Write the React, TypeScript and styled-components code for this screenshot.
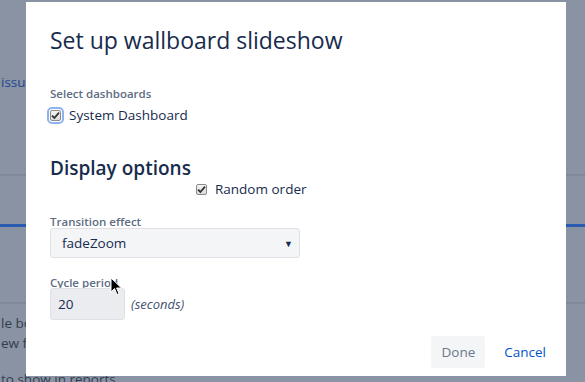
import React, { useState } from "react";
import styled, { createGlobalStyle } from "styled-components";

const GlobalStyle = createGlobalStyle`
  html, body {
    margin: 0;
    padding: 0;
    width: 585px;
    height: 382px;
    overflow: hidden;
    background: #8993a4;
    font-family: "Open Sans", "Noto Sans", Arial, sans-serif;
  }
`;

// Dimmed page behind the dialog
const Page = styled.div`
  position: relative;
  width: 585px;
  height: 382px;
  overflow: hidden;
  background: #8993a4;
  display: flex;
  flex-direction: column;
`;

const PageText = styled.div<{ $blue?: boolean; $top: number }>`
  flex-shrink: 0;
  margin-top: ${(p) => p.$top}px;
  padding-left: 1px;
  font-size: 13.5px;
  line-height: 20px;
  color: ${(p) => (p.$blue ? "#23478f" : "#333d50")};
  white-space: nowrap;
`;

const Rule = styled.div<{ $top: number; $blue?: boolean }>`
  flex-shrink: 0;
  margin-top: ${(p) => p.$top}px;
  height: ${(p) => (p.$blue ? 3 : 2)}px;
  background: ${(p) => (p.$blue ? "#2a5bb0" : "#7f899a")};
`;

// Dialog
const Dialog = styled.div`
  position: absolute;
  left: 26px;
  top: 2px;
  width: 540px;
  height: 374px;
  background: #ffffff;
  box-sizing: border-box;
  padding: 24px 20px 8px 24px;
  display: flex;
  flex-direction: column;
  color: #172b4d;
`;

const Title = styled.h2`
  margin: 0;
  font-size: 23px;
  line-height: 28px;
  font-weight: 400;
  color: #172b4d;
`;

const Label = styled.div<{ $top: number }>`
  margin-top: ${(p) => p.$top}px;
  font-size: 11.5px;
  line-height: 14px;
  font-weight: 600;
  color: #5e6c84;
`;

const CheckRow = styled.label<{ $indent?: number; $top: number }>`
  display: flex;
  align-items: center;
  gap: 8px;
  margin-top: ${(p) => p.$top}px;
  margin-left: ${(p) => p.$indent ?? 0}px;
  font-size: 13.5px;
  line-height: 20px;
  color: #172b4d;
`;

const Box = styled.span<{ $focus?: boolean }>`
  width: 11px;
  height: 11px;
  box-sizing: border-box;
  border: 1px solid #8b8b8b;
  border-radius: 2px;
  background: linear-gradient(#f4f4f4, #dcdcdc);
  display: flex;
  align-items: center;
  justify-content: center;
  outline: ${(p) => (p.$focus ? "2px solid #8eb2f0" : "none")};
  outline-offset: 1px;
`;

const SectionTitle = styled.h3`
  margin: 31px 0 0;
  font-size: 19px;
  line-height: 24px;
  font-weight: 600;
  color: #172b4d;
`;

const Select = styled.div`
  margin-top: -1px;
  width: 250px;
  height: 30px;
  box-sizing: border-box;
  border: 1px solid #dfe1e6;
  border-radius: 3px;
  background: #f4f5f7;
  display: flex;
  align-items: center;
  justify-content: space-between;
  padding: 0 6px 0 11px;
  font-size: 13.5px;
  color: #172b4d;
`;

const Arrow = styled.span`
  font-size: 9px;
  color: #172b4d;
`;

const FieldRow = styled.div`
  margin-top: -2px;
  display: flex;
  align-items: center;
  gap: 6px;
`;

const NumberInput = styled.div`
  width: 75px;
  height: 32px;
  box-sizing: border-box;
  border: 1px solid #dfe1e6;
  border-radius: 3px;
  background: #ebecf0;
  display: flex;
  align-items: center;
  padding-left: 7px;
  font-size: 13.5px;
  color: #172b4d;
`;

const Hint = styled.span`
  font-size: 13px;
  font-style: italic;
  color: #42526e;
`;

const Footer = styled.div`
  margin-top: auto;
  display: flex;
  justify-content: flex-end;
  align-items: center;
  gap: 19px;
`;

const Button = styled.button<{ $link?: boolean }>`
  height: 32px;
  border: none;
  border-radius: 3px;
  font-family: inherit;
  font-size: 13.5px;
  padding: 0 ${(p) => (p.$link ? "0" : "10px")};
  background: ${(p) => (p.$link ? "transparent" : "#f4f5f7")};
  color: ${(p) => (p.$link ? "#0052cc" : "#6b778c")};
  cursor: pointer;
`;

const Cursor = styled.svg`
  position: absolute;
  left: 110px;
  top: 277px;
`;

const Tick = () => (
  <svg width="9" height="9" viewBox="0 0 9 9">
    <path d="M1 4.6 L3.4 7 L8 1.6" fill="none" stroke="#333" strokeWidth="1.8" />
  </svg>
);

export default function App() {
  const [random, setRandom] = useState(true);
  const [system, setSystem] = useState(true);

  return (
    <>
      <GlobalStyle />
      <Page>
        <PageText $blue $top={72}>issues</PageText>
        <Rule $top={82} />
        <Rule $top={48} $blue />
        <Rule $top={75} />
        <PageText $top={9}>le board</PageText>
        <PageText $top={0}>ew features</PageText>
        <PageText $top={16}>to show in reports</PageText>

        <Dialog>
          <Title>Set up wallboard slideshow</Title>

          <Label $top={33}>Select dashboards</Label>
          <CheckRow $top={4} onClick={() => setSystem(!system)}>
            <Box $focus>{system && <Tick />}</Box>
            System Dashboard
          </CheckRow>

          <SectionTitle>Display options</SectionTitle>
          <CheckRow $top={-1} $indent={146} onClick={() => setRandom(!random)}>
            <Box>{random && <Tick />}</Box>
            Random order
          </CheckRow>

          <Label $top={16}>Transition effect</Label>
          <Select>
            fadeZoom
            <Arrow>▼</Arrow>
          </Select>

          <Label $top={18}>Cycle period</Label>
          <FieldRow>
            <NumberInput>20</NumberInput>
            <Hint>(seconds)</Hint>
          </FieldRow>

          <Footer>
            <Button>Done</Button>
            <Button $link>Cancel</Button>
          </Footer>
        </Dialog>

        <Cursor width="13" height="20" viewBox="0 0 13 20">
          <path d="M1 1 L1 15 L4.5 11.5 L7 17.5 L9 16.6 L6.6 11 L11.5 11 Z" fill="#000" stroke="#fff" strokeWidth="1" />
        </Cursor>
      </Page>
    </>
  );
}
